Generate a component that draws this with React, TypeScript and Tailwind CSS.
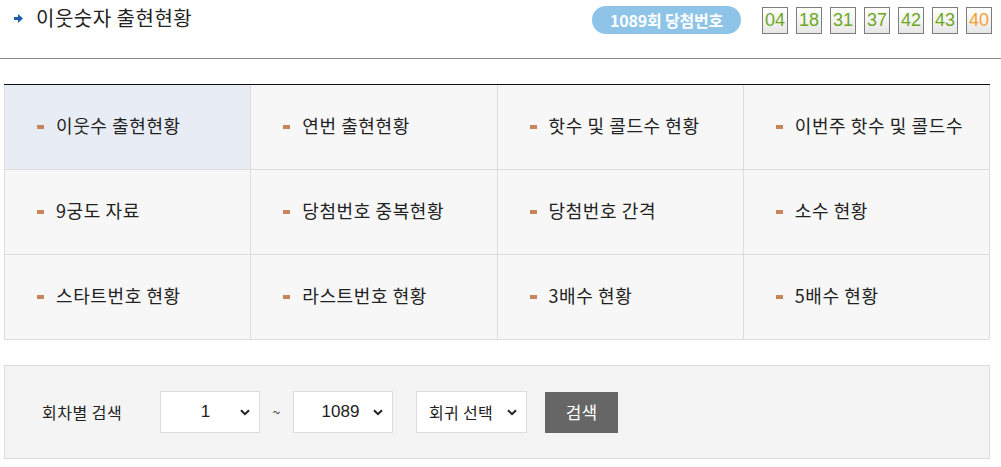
import React from 'react';

const FONT = { fontFamily: '"Noto Sans CJK KR", "Noto Sans", sans-serif' };
const DIGITS = { fontFamily: '"Liberation Sans", Arial, sans-serif' };

const numbers = ['04', '18', '31', '37', '42', '43'];
const bonus = '40';

const menus = [
  '이웃수 출현현황',
  '연번 출현현황',
  '핫수 및 콜드수 현황',
  '이번주 핫수 및 콜드수',
  '9궁도 자료',
  '당첨번호 중복현황',
  '당첨번호 간격',
  '소수 현황',
  '스타트번호 현황',
  '라스트번호 현황',
  '3배수 현황',
  '5배수 현황',
];

const Chevron: React.FC = () => (
  <svg width="10" height="7" viewBox="0 0 10 7" className="shrink-0">
    <path d="M1 1.2 L5 5.2 L9 1.2" fill="none" stroke="#222" strokeWidth="2" />
  </svg>
);

const FakeSelect: React.FC<{ label: string; width: string; textClass: string; digits?: boolean }> = ({
  label,
  width,
  textClass,
  digits,
}) => (
  <div className={`${width} h-[42px] bg-white border border-[#dcdcdc] flex items-center pr-[9px]`}>
    <span className={`flex-1 text-[#222] ${textClass}`} style={digits ? DIGITS : undefined}>
      {label}
    </span>
    <Chevron />
  </div>
);

const App: React.FC = () => {
  return (
    <div className="w-[1001px] h-[467px] bg-white overflow-hidden" style={FONT}>
      <header className="h-[59px] border-b border-[#8a8a8a] flex items-start justify-between">
        <div className="flex items-center pl-[14px] pt-[4px] h-[32px]">
          <svg width="9" height="9" viewBox="0 0 9 9" className="mr-[13px] mt-[1px]">
            <path d="M0 3 H4 V0 L9 4.5 L4 9 V6 H0 Z" fill="#1d5ea8" />
          </svg>
          <h1 className="text-[20px] text-[#222] leading-[28px] tracking-[0.5px]">이웃숫자 출현현황</h1>
        </div>
        <div className="flex items-center pt-[6px] pr-[9px]">
          <span className="h-[28px] w-[149px] rounded-full bg-[#8ec4e8] text-white text-[16px] font-bold flex items-center justify-center tracking-[-0.2px]">
            1089회 당첨번호
          </span>
          <div className="flex gap-[8px] ml-[21px]">
            {[...numbers, bonus].map((n, i) => (
              <span
                key={n + i}
                style={DIGITS}
                className={`w-[26px] h-[27px] border border-[#7d7d7d] bg-gradient-to-b from-white via-[#f4f4f4] to-[#e6e6e6] flex items-center justify-center text-[18px] leading-none ${
                  i === 6 ? 'text-[#f5a030]' : 'text-[#6ca81e]'
                }`}
              >
                {n}
              </span>
            ))}
          </div>
        </div>
      </header>

      <nav className="mt-[25px] ml-[4px] w-[986px] border-t border-[#111]">
        <div className="grid grid-cols-4 border-l border-[#dddddd]">
          {menus.map((m, i) => (
            <div
              key={m}
              className={`h-[85px] border-r border-b border-[#dddddd] flex items-center pl-[32px] pb-[3px] ${
                i === 0 ? 'bg-[#e8edf5]' : 'bg-[#f7f7f7]'
              }`}
            >
              <span className="w-[7px] h-[4px] bg-[#c8845a] mr-[12px] mt-[2px]" />
              <span className="text-[18px] text-[#222] tracking-[0.6px]">{m}</span>
            </div>
          ))}
        </div>
      </nav>

      <section className="mt-[25px] ml-[4px] w-[986px] h-[94px] bg-[#f4f4f4] border border-[#dddddd] flex items-center pl-[37px]">
        <span className="w-[118px] text-[16px] text-[#222] tracking-[0.5px]">회차별 검색</span>
        <FakeSelect label="1" width="w-[100px]" textClass="text-center pl-[10px] text-[17px]" digits />
        <span className="w-[33px] text-center text-[14px] text-[#444]">~</span>
        <FakeSelect label="1089" width="w-[100px]" textClass="text-center pl-[14px] text-[17px]" digits />
        <div className="w-[23px]" />
        <FakeSelect label="회귀 선택" width="w-[111px]" textClass="pl-[12px] text-[16px] tracking-[0.3px]" />
        <button className="ml-[18px] w-[73px] h-[41px] bg-[#666666] text-white text-[17px]">검색</button>
      </section>
    </div>
  );
};

export default App;
